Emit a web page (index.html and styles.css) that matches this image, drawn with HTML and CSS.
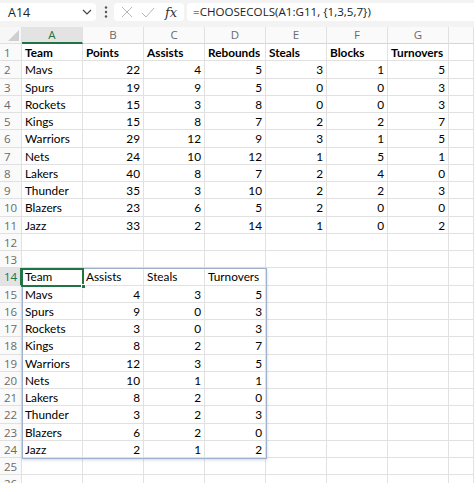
FILE: index.html
```html
<!DOCTYPE html>
<html lang="en">
<head>
    <meta charset="UTF-8">
    <title>CHOOSECOLS</title>
    <link rel="stylesheet" href="styles.css">
</head>
<body>

<div class="formula-bar">
    <div class="name-box">
        <span>A14</span>
        <svg class="chevron" width="10" height="6" viewBox="0 0 10 6">
            <path d="M1 1 L5 5 L9 1" fill="none" stroke="#444" stroke-width="1.2"/>
        </svg>
    </div>
    <svg class="dots" width="4" height="12" viewBox="0 0 4 12">
        <circle cx="2" cy="1.5" r="1.2" fill="#555"/>
        <circle cx="2" cy="6" r="1.2" fill="#555"/>
        <circle cx="2" cy="10.5" r="1.2" fill="#555"/>
    </svg>
    <div class="fx-box">
        <svg class="cancel" width="12" height="12" viewBox="0 0 12 12">
            <path d="M1 1 L11 11 M11 1 L1 11" stroke="#b8b8b8" stroke-width="1"/>
        </svg>
        <svg class="enter" width="14" height="11" viewBox="0 0 14 11">
            <path d="M1 6 L5 10 L13 1" fill="none" stroke="#b8b8b8" stroke-width="1"/>
        </svg>
        <span class="fx">fx</span>
    </div>
    <div class="formula-box">=CHOOSECOLS(A1:G11, {1,3,5,7})</div>
</div>

<div class="sheet-wrap">
    <div class="sheet" id="sheet"></div>
    <!-- spill range and active cell lie over the grid -->
    <div class="spill-outline"></div>
    <div class="active-cell"><span class="fill-handle"></span></div>
</div>

<script>
    const letters = ["A", "B", "C", "D", "E", "F", "G", ""];

    const stats = [
        ["Mavs", 22, 4, 5, 3, 1, 5],
        ["Spurs", 19, 9, 5, 0, 0, 3],
        ["Rockets", 15, 3, 8, 0, 0, 3],
        ["Kings", 15, 8, 7, 2, 2, 7],
        ["Warriors", 29, 12, 9, 3, 1, 5],
        ["Nets", 24, 10, 12, 1, 5, 1],
        ["Lakers", 40, 8, 7, 2, 4, 0],
        ["Thunder", 35, 3, 10, 2, 2, 3],
        ["Blazers", 23, 6, 5, 2, 0, 0],
        ["Jazz", 33, 2, 14, 1, 0, 2],
    ];

    function buildRows() {
        const rows = {};
        rows[1] = ["Team", "Points", "Assists", "Rebounds", "Steals", "Blocks", "Turnovers"];
        stats.forEach((s, i) => rows[i + 2] = s);
        rows[14] = ["Team", "Assists", "Steals", "Turnovers"];
        stats.forEach((s, i) => rows[i + 15] = [s[0], s[2], s[4], s[6]]);
        return rows;
    }

    function addCell(sheet, cls, text) {
        let cell = document.createElement("div");
        cell.className = cls;
        if (text !== undefined) cell.textContent = text;
        sheet.appendChild(cell);
    }

    function loadSheet() {
        const sheet = document.getElementById("sheet");
        const rows = buildRows();

        addCell(sheet, "corner");
        letters.forEach((l, i) => addCell(sheet, i === 0 ? "col-head active" : "col-head", l));

        for (let r = 1; r <= 26; r++) {
            addCell(sheet, r === 14 ? "row-head active" : "row-head", r);
            let values = rows[r] || [];
            for (let c = 0; c < 8; c++) {
                let v = values[c];
                let cls = "cell";
                if (typeof v === "number") cls += " num";
                if (r === 1) cls += " bold";
                addCell(sheet, cls, v === undefined ? "" : v);
            }
        }
    }

    loadSheet();
</script>

</body>
</html>
```

FILE: styles.css
```css
* {
    box-sizing: border-box;
}

body {
    margin: 0;
    background-color: #ffffff;
    font-family: Lato, "Liberation Sans", sans-serif;
    overflow: hidden;
}

/* Formula bar along the top */
.formula-bar {
    height: 27px;
    background-color: #f3f3f3;
    display: flex;
    align-items: flex-start;
    padding-top: 3px;
    font-family: "Open Sans", "Liberation Sans", sans-serif;
    color: #222;
}

.name-box {
    width: 96px;
    height: 18px;
    background-color: #fff;
    border-radius: 0 4px 4px 0;
    display: flex;
    align-items: center;
    padding-left: 8px;
    font-size: 12.5px;
}

.name-box span {
    flex: 1;
}

.chevron {
    margin-right: 4px;
}

.dots {
    margin: 3px 6px 0 8px;
}

.fx-box {
    width: 70px;
    height: 18px;
    background-color: #fff;
    border-radius: 4px;
    display: flex;
    align-items: center;
    padding-left: 7px;
}

.enter {
    margin-left: 8px;
}

.fx {
    font-family: "DejaVu Serif", "Liberation Serif", serif;
    font-style: italic;
    font-size: 13px;
    margin-left: 10px;
    color: #333;
}

.formula-box {
    flex: 1;
    height: 18px;
    margin-left: 3px;
    background-color: #fff;
    border-radius: 4px 0 0 4px;
    padding-left: 6px;
    font-size: 11.6px;
    line-height: 18px;
}

/* The grid */
.sheet-wrap {
    position: relative;
}

.sheet {
    display: grid;
    grid-template-columns: 22px repeat(7, 61px) 1fr;
    grid-template-rows: 17px repeat(26, 17.26px);
    font-size: 11.8px;
}

.sheet > div {
    border-right: 1px solid #e1e1e1;
    border-bottom: 1px solid #e1e1e1;
    white-space: nowrap;
    overflow: hidden;
}

.corner {
    background-color: #f7f7f7;
    position: relative;
}

.corner::after {
    content: "";
    position: absolute;
    right: 2px;
    bottom: 2px;
    width: 11px;
    height: 11px;
    background-color: #cfcfcf;
    clip-path: polygon(100% 0, 100% 100%, 0 100%);
}

.col-head, .row-head {
    background-color: #fafafa;
    color: #6a6a6a;
    font-family: "Open Sans", "Liberation Sans", sans-serif;
    font-size: 11.5px;
}

.col-head {
    text-align: center;
    line-height: 16px;
    border-bottom-color: #d6d6d6 !important;
}

.row-head {
    padding-left: 4px;
    line-height: 17px;
}

.col-head.active {
    background-color: #e3e3e3;
    color: #217346;
    border-bottom: 2px solid #217346 !important;
}

.row-head.active {
    background-color: #e3e3e3;
    color: #217346;
    border-right: 2px solid #217346 !important;
}

.cell {
    padding: 0 3px;
    line-height: 18px;
    color: #000;
}

.num {
    text-align: right;
}

.bold {
    font-weight: bold;
}

.spill-outline {
    position: absolute;
    left: 22px;
    top: 241px;
    width: 245px;
    height: 191px;
    border: 1px solid #9fb1cc;
    box-shadow: 0 1px 3px rgba(120, 140, 170, 0.35);
    pointer-events: none;
}

.active-cell {
    position: absolute;
    left: 21px;
    top: 241px;
    width: 63px;
    height: 19px;
    border: 2px solid #217346;
}

.fill-handle {
    position: absolute;
    right: -4px;
    bottom: -4px;
    width: 5px;
    height: 5px;
    background-color: #217346;
    border: 1px solid #fff;
}
```
